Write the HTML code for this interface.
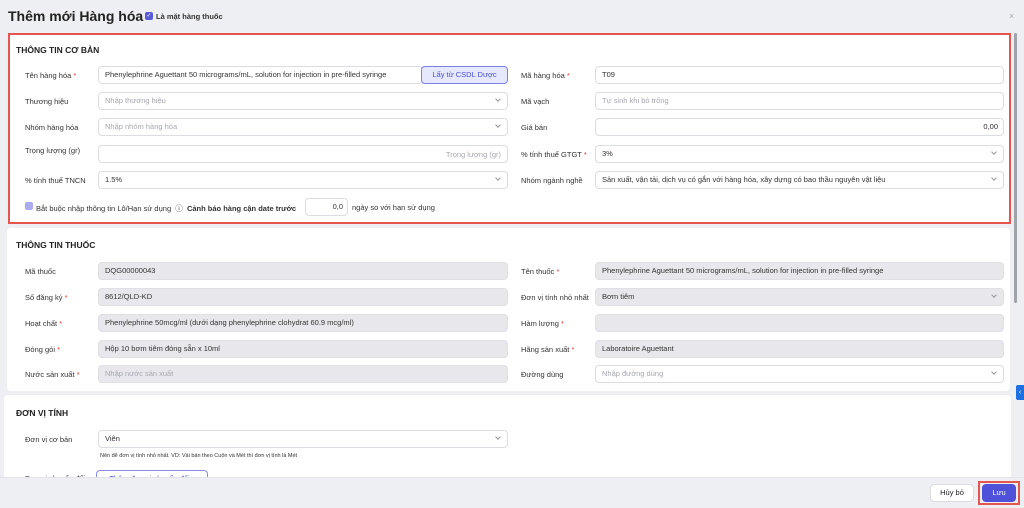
<!DOCTYPE html><html><head><meta charset="utf-8"><style>
*{box-sizing:border-box;margin:0;padding:0}
body{width:1024px;height:508px;overflow:hidden;background:#eeeff3;font-family:"Liberation Sans",sans-serif;color:#222;position:relative;font-size:8px}
.a{position:absolute}
.panel{position:absolute;background:#fff;border-radius:4px}
.h{font-weight:bold;font-size:8.5px;color:#222}
.lb{position:absolute;font-size:7.5px;color:#333}
.req{color:#e53935}
.in{position:absolute;height:18px;border:1px solid #dcdde2;border-radius:4px;background:#fff;font-size:7.5px;line-height:16px;padding-left:6px;color:#333;white-space:nowrap;overflow:hidden}
.g{background:#e8e8ec;border-color:#e0e0e4}
.ph{color:#a6a8b0}
.chev{position:absolute;right:7px;top:4px;width:4px;height:4px;border-right:1px solid #999;border-bottom:1px solid #999;transform:rotate(45deg)}
</style></head><body>
<div class="a" style="left:8px;top:8px;font-size:14px;font-weight:bold;color:#222">Thêm mới Hàng hóa</div>
<div class="a" style="left:145px;top:12px;width:8px;height:8px;background:#5b5bd6;border-radius:2px;color:#fff;font-size:6px;line-height:8px;text-align:center">✓</div>
<div class="a" style="left:156px;top:12px;font-size:7.5px;font-weight:bold;color:#333">Là mặt hàng thuốc</div>
<div class="a" style="left:1009px;top:11px;font-size:9px;color:#aaa">×</div>
<div class="a" style="left:1014px;top:33px;width:3px;height:270px;background:#a0a3aa;border-radius:2px"></div>
<div class="a" style="left:1016px;top:385px;width:8px;height:15px;background:#1e6fe0;border-radius:2px 0 0 2px;color:#fff;font-size:7px;line-height:15px;text-align:center">‹</div>

<div class="panel" style="left:8px;top:33px;width:1003px;height:191px;border:2px solid #e5554f;border-radius:0"></div>
<div class="a h" style="left:16px;top:45px">THÔNG TIN CƠ BẢN</div>
<div class="lb" style="left:25px;top:71px">Tên hàng hóa <span class="req">*</span></div>
<div class="in" style="left:98px;top:66px;width:325px">Phenylephrine Aguettant 50 micrograms/mL, solution for injection in pre-filled syringe</div>
<div class="in" style="left:421px;top:66px;width:87px;background:#e6e8fd;border-color:#7b7fe6;color:#4b4fd0;text-align:center;padding:0">Lấy từ CSDL Dược</div>
<div class="lb" style="left:25px;top:97px">Thương hiệu</div>
<div class="in ph" style="left:98px;top:92px;width:410px">Nhập thương hiệu<i class="chev"></i></div>
<div class="lb" style="left:25px;top:123px">Nhóm hàng hóa</div>
<div class="in ph" style="left:98px;top:118px;width:410px">Nhập nhóm hàng hóa<i class="chev"></i></div>
<div class="lb" style="left:25px;top:146px">Trọng lượng (gr)</div>
<div class="in ph" style="left:98px;top:145px;width:410px;text-align:right;padding-right:6px;line-height:17px">Trọng lượng (gr)</div>
<div class="lb" style="left:25px;top:176px">% tính thuế TNCN</div>
<div class="in" style="left:98px;top:171px;width:410px">1.5%<i class="chev"></i></div>
<div class="a" style="left:25px;top:202px;width:8px;height:8px;background:#a9adf0;border-radius:2px"></div>
<div class="lb" style="left:36px;top:203px">Bắt buộc nhập thông tin Lô/Hạn sử dụng &nbsp;ⓘ&nbsp; <b style="font-weight:bold">Cảnh báo hàng cận date trước</b></div>
<div class="in" style="left:305px;top:198px;width:43px;text-align:right;padding-right:4px">0,0</div>
<div class="lb" style="left:352px;top:203px">ngày so với hạn sử dụng</div>

<div class="lb" style="left:521px;top:71px">Mã hàng hóa <span class="req">*</span></div>
<div class="in" style="left:595px;top:66px;width:409px">T09</div>
<div class="lb" style="left:521px;top:97px">Mã vạch</div>
<div class="in ph" style="left:595px;top:92px;width:409px">Tự sinh khi bỏ trống</div>
<div class="lb" style="left:521px;top:123px">Giá bán</div>
<div class="in" style="left:595px;top:118px;width:409px;text-align:right;padding-right:5px">0,00</div>
<div class="lb" style="left:521px;top:150px">% tính thuế GTGT <span class="req">*</span></div>
<div class="in" style="left:595px;top:145px;width:409px">3%<i class="chev"></i></div>
<div class="lb" style="left:521px;top:176px">Nhóm ngành nghề</div>
<div class="in" style="left:595px;top:171px;width:409px">Sản xuất, vận tải, dịch vụ có gắn với hàng hóa, xây dựng có bao thầu nguyên vật liệu<i class="chev"></i></div>

<div class="panel" style="left:7px;top:228px;width:1003px;height:163px"></div>
<div class="a h" style="left:16px;top:240px">THÔNG TIN THUỐC</div>
<div class="lb" style="left:25px;top:267px">Mã thuốc</div>
<div class="in g" style="left:98px;top:262px;width:410px">DQG00000043</div>
<div class="lb" style="left:25px;top:293px">Số đăng ký <span class="req">*</span></div>
<div class="in g" style="left:98px;top:288px;width:410px">8612/QLD-KD</div>
<div class="lb" style="left:25px;top:319px">Hoạt chất <span class="req">*</span></div>
<div class="in g" style="left:98px;top:314px;width:410px">Phenylephrine 50mcg/ml (dưới dạng phenylephrine clohydrat 60.9 mcg/ml)</div>
<div class="lb" style="left:25px;top:345px">Đóng gói <span class="req">*</span></div>
<div class="in g" style="left:98px;top:340px;width:410px">Hộp 10 bơm tiêm đóng sẵn x 10ml</div>
<div class="lb" style="left:25px;top:370px">Nước sản xuất <span class="req">*</span></div>
<div class="in g ph" style="left:98px;top:365px;width:410px">Nhập nước sản xuất</div>

<div class="lb" style="left:521px;top:267px">Tên thuốc <span class="req">*</span></div>
<div class="in g" style="left:595px;top:262px;width:409px">Phenylephrine Aguettant 50 micrograms/mL, solution for injection in pre-filled syringe</div>
<div class="lb" style="left:521px;top:293px">Đơn vị tính nhỏ nhất</div>
<div class="in g" style="left:595px;top:288px;width:409px">Bơm tiêm<i class="chev"></i></div>
<div class="lb" style="left:521px;top:319px">Hàm lượng <span class="req">*</span></div>
<div class="in g" style="left:595px;top:314px;width:409px"></div>
<div class="lb" style="left:521px;top:345px">Hãng sản xuất <span class="req">*</span></div>
<div class="in g" style="left:595px;top:340px;width:409px">Laboratoire Aguettant</div>
<div class="lb" style="left:521px;top:370px">Đường dùng</div>
<div class="in ph" style="left:595px;top:365px;width:409px">Nhập đường dùng<i class="chev"></i></div>

<div class="panel" style="left:4px;top:395px;width:1007px;height:90px;border-radius:4px 4px 0 0"></div>
<div class="a h" style="left:16px;top:408px">ĐƠN VỊ TÍNH</div>
<div class="lb" style="left:25px;top:435px">Đơn vị cơ bản</div>
<div class="in" style="left:98px;top:430px;width:410px">Viên<i class="chev"></i></div>
<div class="a" style="left:100px;top:453px;font-size:5.5px;color:#333">Nên để đơn vị tính nhỏ nhất. VD: Vải bán theo Cuộn và Mét thì đơn vị tính là Mét</div>
<div class="lb" style="left:25px;top:474px">Đơn vị chuyển đổi</div>
<div class="in" style="left:96px;top:470px;width:112px;border-color:#8a8de8;color:#4b4fd0">+ Thêm đơn vị chuyển đổi</div>
<div class="a" style="left:0;top:477px;width:1024px;height:31px;background:#eeeff3;border-top:1px solid #e4e5ea"></div>
<div class="a" style="left:930px;top:484px;width:44px;height:18px;background:#fff;border:1px solid #dcdde2;border-radius:4px;font-size:7.5px;line-height:16px;text-align:center">Hủy bỏ</div>
<div class="a" style="left:978px;top:481px;width:42px;height:24px;border:2px solid #e5554f"></div>
<div class="a" style="left:982px;top:484px;width:34px;height:18px;background:#4f52d8;border-radius:4px;color:#fff;font-size:7.5px;line-height:18px;text-align:center">Lưu</div>
</body></html>
